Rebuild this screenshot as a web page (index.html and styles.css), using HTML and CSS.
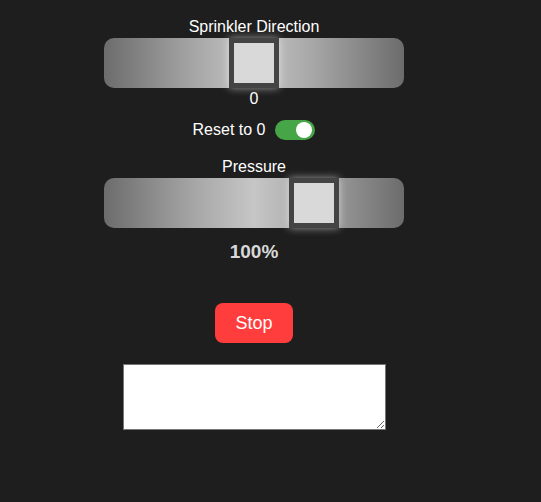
FILE: index.html
```html
<!DOCTYPE html>
<html>
<head>
<meta charset="utf-8">
<link rel="stylesheet" href="styles.css">
</head>
<body>
<div class="app">
  <div class="label">Sprinkler Direction</div>
  <input class="slider" type="range" min="-90" max="90" value="0">
  <div class="value">0</div>
  <label class="reset-row">
    <span class="reset-text">Reset to 0</span>
    <input class="toggle-input" type="checkbox" checked>
    <span class="toggle"></span>
  </label>
  <div class="label label-pressure">Pressure</div>
  <input class="slider" type="range" min="0" max="135.1" value="100">
  <div class="percent">100%</div>
  <button class="stop">Stop</button>
  <textarea class="log"></textarea>
</div>
</body>
</html>
```
FILE: styles.css
```css
html, body {
  margin: 0;
  background: #1e1e1e;
}
body {
  font-family: "Liberation Sans", Arial, sans-serif;
  color: #fff;
}
.app {
  width: 508px;
  padding-top: 18px;
  display: flex;
  flex-direction: column;
  align-items: center;
}
.label {
  font-size: 16px;
  line-height: 18px;
  height: 18px;
}
.label-pressure {
  margin-top: 18px;
}
.slider {
  -webkit-appearance: none;
  appearance: none;
  margin: 2px 0 0 0;
  width: 300px;
  height: 50px;
  border-radius: 10px;
  background: linear-gradient(90deg, #6c6c6c 0%, #a6a6a6 30%, #c6c6c6 50%, #a6a6a6 70%, #6c6c6c 100%);
  outline: none;
  padding: 0;
}
.slider::-webkit-slider-thumb {
  -webkit-appearance: none;
  appearance: none;
  width: 50px;
  height: 50px;
  box-sizing: border-box;
  background: #d9d9d9;
  border: 5px solid #444;
  box-shadow: 0 0 8px rgba(255, 255, 255, 0.55);
}
.value {
  margin-top: 2px;
  font-size: 16px;
  line-height: 18px;
}
.reset-row {
  margin-top: 12px;
  display: flex;
  align-items: center;
  gap: 10px;
  height: 20px;
}
.reset-text {
  font-size: 16px;
  line-height: 20px;
}
.toggle-input {
  display: none;
}
.toggle {
  position: relative;
  width: 40px;
  height: 20px;
  border-radius: 10px;
  background: #46a546;
}
.toggle::after {
  content: "";
  position: absolute;
  top: 2px;
  right: 3px;
  width: 16px;
  height: 16px;
  border-radius: 50%;
  background: #fff;
}
.percent {
  margin-top: 13px;
  font-size: 19px;
  line-height: 22px;
  font-weight: bold;
  color: #d9d9d9;
}
.stop {
  margin-top: 40px;
  height: 40px;
  padding: 0 20px;
  border: none;
  border-radius: 8px;
  background: #ff3d3d;
  color: #fff;
  font-family: "Liberation Sans", Arial, sans-serif;
  font-size: 18px;
}
.log {
  margin-top: 21px;
  width: 263px;
  height: 66px;
  box-sizing: border-box;
  border: 1px solid #767676;
  background: #fff;
}
```
